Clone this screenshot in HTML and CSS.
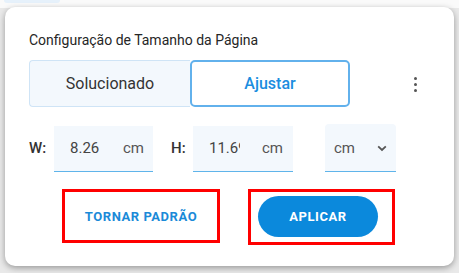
FILE: index.html
```html
<!DOCTYPE html>
<html lang="pt">
<head>
<meta charset="utf-8">
<link rel="stylesheet" href="styles.css">
</head>
<body>
<div class="backdrop">
  <div class="bg-pill"></div>
  <div class="panel">
    <div class="title">Configuração de Tamanho da Página</div>
    <div class="mode-row">
      <div class="toggle">
        <div class="seg seg-off">Solucionado</div>
        <div class="seg seg-on">Ajustar</div>
      </div>
      <div class="kebab" aria-label="Mais opções">
        <span class="dot"></span><span class="dot"></span><span class="dot"></span>
      </div>
    </div>
    <div class="size-row">
      <span class="lbl lbl-w">W:</span>
      <div class="field field-w">
        <span class="val">8.26</span>
        <span class="unit">cm</span>
      </div>
      <span class="lbl lbl-h">H:</span>
      <div class="field field-h">
        <span class="val">11.69</span>
        <span class="unit">cm</span>
      </div>
      <div class="select">
        <span class="sel-text">cm</span>
        <svg class="chev" width="10" height="7" viewBox="0 0 10 7"><path d="M1.2 1.4 L5 5 L8.8 1.4" fill="none" stroke="#555" stroke-width="1.8"/></svg>
      </div>
    </div>
    <div class="btn-row">
      <div class="mark mark-1"><span class="btn-text">TORNAR PADRÃO</span></div>
      <div class="mark mark-2"><span class="btn-primary">APLICAR</span></div>
    </div>
  </div>
</div>
</body>
</html>
```
FILE: styles.css
```css
html, body {
  margin: 0;
  padding: 0;
}
body {
  width: 459px;
  height: 273px;
  overflow: hidden;
  background: #e4e4e4;
  font-family: Roboto, "Noto Sans", "Liberation Sans", sans-serif;
}
.backdrop {
  width: 459px;
  height: 273px;
  background: linear-gradient(#fafafa 0, #fafafa 8px, #e9e9e9 8px);
  overflow: hidden;
}
.bg-pill {
  margin-left: 4px;
  width: 56px;
  height: 3px;
  background: #e6f1fb;
  border-radius: 0 0 14px 14px;
}
.panel {
  margin: 4px 0 0 5px;
  width: 449px;
  height: 259px;
  box-sizing: border-box;
  background: #fff;
  border-radius: 10px;
  box-shadow: 0 2px 6px rgba(0, 0, 0, 0.35);
  padding: 25px 0 0 24px;
}
.title {
  font-size: 14px;
  line-height: 17px;
  color: #262626;
}
.mode-row {
  margin-top: 11px;
  display: flex;
  align-items: center;
}
.toggle {
  display: flex;
  width: 321px;
  height: 47px;
}
.seg {
  display: flex;
  align-items: center;
  justify-content: center;
  font-size: 16px;
  box-sizing: border-box;
}
.seg-off {
  width: 161px;
  background: #f3f8fd;
  border: 1px solid #cfe4f6;
  border-right: none;
  border-radius: 4px 0 0 4px;
  color: #333;
}
.seg-on {
  width: 160px;
  background: #fff;
  border: 2px solid #62b1ec;
  border-radius: 5px;
  color: #1b8ddf;
  font-weight: 500;
}
.kebab {
  margin-left: 64px;
  display: flex;
  flex-direction: column;
  gap: 3px;
  padding-top: 2px;
}
.dot {
  width: 3px;
  height: 3px;
  border-radius: 50%;
  background: #555;
}
.size-row {
  margin-top: 17px;
  display: flex;
  align-items: center;
  height: 48px;
}
.lbl {
  font-size: 15px;
  font-weight: 500;
  color: #333;
}
.lbl-w {
  width: 25px;
}
.lbl-h {
  width: 22px;
}
.field {
  height: 46px;
  box-sizing: border-box;
  background: #f3f8fd;
  border-bottom: 1px solid #5fb4ea;
  display: flex;
  align-items: center;
  padding-left: 16px;
  font-size: 15px;
  margin-top: 1px;
}
.field-w {
  width: 99px;
  margin-right: 18px;
}
.field-h {
  width: 100px;
  margin-right: 32px;
}
.val {
  width: 31px;
  overflow: hidden;
  white-space: nowrap;
  color: #444;
}
.unit {
  margin-left: 22px;
  color: #555;
}
.select {
  width: 71px;
  height: 48px;
  box-sizing: border-box;
  background: #f3f8fd;
  border-bottom: 1px solid #5fb4ea;
  border-radius: 4px 4px 0 0;
  display: flex;
  align-items: center;
  padding-left: 9px;
  font-size: 15px;
  color: #555;
}
.chev {
  margin-left: 22px;
  margin-top: 1px;
}
.btn-row {
  margin-top: 17px;
  display: flex;
  align-items: flex-start;
}
.mark {
  border: 3px solid #f00;
  box-sizing: border-box;
  display: flex;
  align-items: center;
  justify-content: center;
}
.mark-1 {
  margin-left: 33px;
  width: 158px;
  height: 54px;
}
.mark-2 {
  margin-left: 28px;
  width: 147px;
  height: 56px;
  justify-content: flex-start;
  padding-left: 7px;
}
.btn-text {
  font-size: 13px;
  font-weight: 700;
  color: #1a8ad8;
  letter-spacing: 0.55px;
}
.btn-primary {
  width: 120px;
  height: 41px;
  border-radius: 21px;
  background: #0b89dc;
  color: #fff;
  font-size: 13px;
  font-weight: 700;
  letter-spacing: 0.55px;
  display: flex;
  align-items: center;
  justify-content: center;
  margin-top: -2px;
}
```
